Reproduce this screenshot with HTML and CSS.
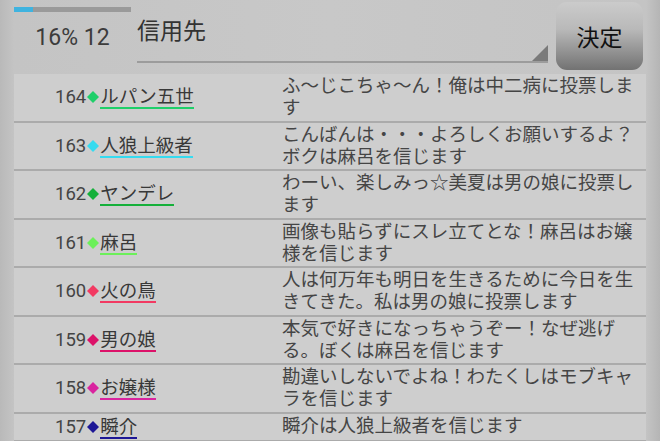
FILE: index.html
```html
<!DOCTYPE html>
<html lang="ja">
<head>
<meta charset="utf-8">
<link rel="stylesheet" href="styles.css">
</head>
<body>
<div class="screen">
  <header class="header">
    <div class="status">
      <div class="progress"><div class="fill"></div></div>
      <div class="stat">16% 12</div>
    </div>
    <div class="spinner">
      <span class="spinner-text">信用先</span>
      <svg class="spinner-arrow" width="16" height="16" viewBox="0 0 16 16"><polygon points="16,0 16,16 0,16" fill="#7a7a7a"/></svg>
    </div>
    <button class="decide">決定</button>
  </header>
  <div class="list">
    <div class="row">
      <div class="who"><span class="num">164</span><svg class="dia" viewBox="0 0 12 12"><polygon points="6,0 12,6 6,12 0,6" fill="#1fcf6a"/></svg><span class="name c164">ルパン五世</span></div>
      <div class="msg">ふ〜じこちゃ〜ん！俺は中二病に投票します</div>
    </div>
    <div class="row">
      <div class="who"><span class="num">163</span><svg class="dia" viewBox="0 0 12 12"><polygon points="6,0 12,6 6,12 0,6" fill="#35dbf0"/></svg><span class="name c163">人狼上級者</span></div>
      <div class="msg">こんばんは・・・よろしくお願いするよ？ボクは麻呂を信じます</div>
    </div>
    <div class="row">
      <div class="who"><span class="num">162</span><svg class="dia" viewBox="0 0 12 12"><polygon points="6,0 12,6 6,12 0,6" fill="#15b03a"/></svg><span class="name c162">ヤンデレ</span></div>
      <div class="msg">わーい、楽しみっ☆美夏は男の娘に投票します</div>
    </div>
    <div class="row">
      <div class="who"><span class="num">161</span><svg class="dia" viewBox="0 0 12 12"><polygon points="6,0 12,6 6,12 0,6" fill="#6cf05a"/></svg><span class="name c161">麻呂</span></div>
      <div class="msg">画像も貼らずにスレ立てとな！麻呂はお嬢様を信じます</div>
    </div>
    <div class="row">
      <div class="who"><span class="num">160</span><svg class="dia" viewBox="0 0 12 12"><polygon points="6,0 12,6 6,12 0,6" fill="#f23a62"/></svg><span class="name c160">火の鳥</span></div>
      <div class="msg">人は何万年も明日を生きるために今日を生きてきた。私は男の娘に投票します</div>
    </div>
    <div class="row">
      <div class="who"><span class="num">159</span><svg class="dia" viewBox="0 0 12 12"><polygon points="6,0 12,6 6,12 0,6" fill="#dc1269"/></svg><span class="name c159">男の娘</span></div>
      <div class="msg">本気で好きになっちゃうぞー！なぜ逃げる。ぼくは麻呂を信じます</div>
    </div>
    <div class="row">
      <div class="who"><span class="num">158</span><svg class="dia" viewBox="0 0 12 12"><polygon points="6,0 12,6 6,12 0,6" fill="#d9249f"/></svg><span class="name c158">お嬢様</span></div>
      <div class="msg">勘違いしないでよね！わたくしはモブキャラを信じます</div>
    </div>
    <div class="row short">
      <div class="who"><span class="num">157</span><svg class="dia" viewBox="0 0 12 12"><polygon points="6,0 12,6 6,12 0,6" fill="#1d1796"/></svg><span class="name c157">瞬介</span></div>
      <div class="msg">瞬介は人狼上級者を信じます</div>
    </div>
    <div class="row tail"></div>
  </div>
</div>
</body>
</html>
```

FILE: styles.css
```css
html, body {
  margin: 0;
  padding: 0;
}
body {
  width: 660px;
  height: 441px;
  overflow: hidden;
  font-family: Roboto, "Noto Sans CJK JP", sans-serif;
  color: #444;
  background: linear-gradient(to right, #b9b9b9 0px, #c4c4c4 14px, #c8c8c8 330px, #c4c4c4 646px, #b5b5b5 660px);
}
.screen {
  display: flex;
  flex-direction: column;
  height: 441px;
}
.header {
  display: flex;
  height: 74px;
  padding-left: 14px;
  box-sizing: border-box;
}
.status {
  width: 117px;
  display: flex;
  flex-direction: column;
  align-items: center;
  padding-top: 7px;
}
.progress {
  width: 117px;
  height: 5px;
  background: #9a9a9a;
}
.fill {
  width: 19px;
  height: 5px;
  background: #3fb3df;
}
.stat {
  font-size: 23px;
  line-height: 27px;
  margin-top: 12px;
  color: #3c3c3c;
}
.spinner {
  position: relative;
  width: 411px;
  height: 63px;
  margin-left: 6px;
  border-bottom: 2px solid #9c9c9c;
  box-sizing: border-box;
  padding-top: 18px;
}
.spinner-text {
  font-size: 23px;
  line-height: 27px;
  color: #333;
}
.spinner-arrow {
  position: absolute;
  right: 0;
  bottom: 0;
  display: block;
}
.decide {
  width: 87px;
  height: 68px;
  margin: 2px 0 0 8px;
  border: none;
  border-radius: 11px;
  background: linear-gradient(to bottom, #cbcbcb 0%, #b9b9b9 40%, #8a8a8a 80%, #727272 100%);
  font-family: Roboto, "Noto Sans CJK JP", sans-serif;
  font-size: 23px;
  color: #111;
  padding: 0;
}
.list {
  margin-left: 14px;
  width: 632px;
  background: #cecece;
  flex: 1;
  overflow: hidden;
}
.row {
  display: grid;
  grid-template-columns: 268px 1fr;
  border-bottom: 2px solid #ababab;
  padding: 1px 0 1px;
}
.row.tail {
  height: 20px;
  border-bottom: none;
}
.who {
  display: flex;
  align-items: center;
  padding-left: 41px;
}
.num {
  font-size: 18.5px;
  line-height: 22px;
  color: #444;
}
.dia {
  width: 12px;
  height: 12px;
  margin: 0 1px;
  display: block;
}
.name {
  display: inline-block;
  font-size: 18.5px;
  line-height: 20px;
  color: #383838;
  border-bottom: 2px solid;
  margin-top: 2px;
}
.c164 { border-color: #1fcf6a; }
.c163 { border-color: #35dbf0; }
.c162 { border-color: #15b03a; }
.c161 { border-color: #6cf05a; }
.c160 { border-color: #f23a62; }
.c159 { border-color: #dc1269; }
.c158 { border-color: #d9249f; }
.c157 { border-color: #1d1796; }
.msg {
  font-size: 18.5px;
  line-height: 22.25px;
  color: #454545;
  padding-right: 8px;
}
```
